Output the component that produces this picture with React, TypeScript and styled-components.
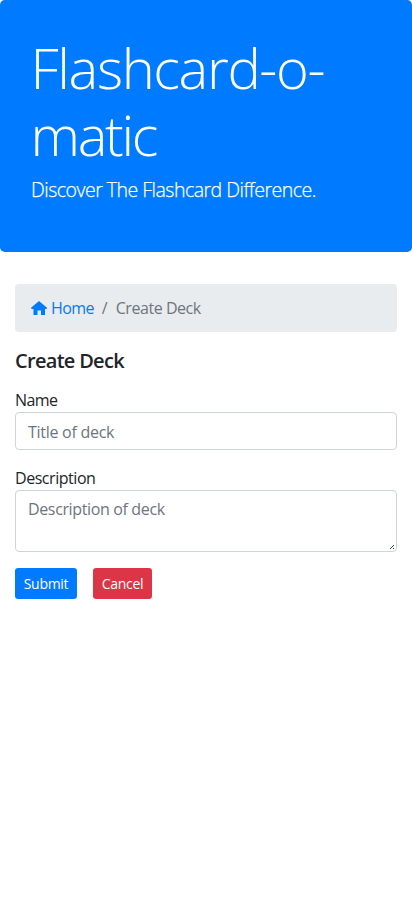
import React from 'react';
import styled, { createGlobalStyle } from 'styled-components';

const Global = createGlobalStyle`
  *, *::before, *::after { box-sizing: border-box; }
  body { margin: 0; background: #fff; color: #212529; font: 400 16px/1.5 "Open Sans", "Noto Sans", sans-serif; }
`;
const Text = styled.span<{ $tracking: number }>`
  white-space: nowrap;
  letter-spacing: ${p => p.$tracking}px;
`;
const TitleLine = styled(Text)`
  display: block;
  height: 67.2px;
`;
const Jumbotron = styled.header`
  height: 252px;
  padding: 34px 32px 32px;
  background: #007bff;
  color: #fff;
  border-radius: 4.8px;
  margin-bottom: 32px;
`;
const Title = styled.h1`
  margin: 0 0 7px -1.5px;
  font-size: 56px;
  font-weight: 300;
  line-height: 67.2px;
`;
const Lead = styled.p`
  margin: 0 0 0 -1px;
  font-size: 19.5px;
  font-weight: 300;
  line-height: 30px;
  letter-spacing: -0.5px;
  white-space: nowrap;
  -webkit-text-stroke: 0.25px #fff;
`;
const Container = styled.main`padding: 0 15px;`;
const Breadcrumb = styled.nav`
  display: flex;
  height: 48px;
  padding: 12px 16px;
  margin-bottom: 16px;
  background: #e9ecef;
  border-radius: 4px;
  color: #6c757d;
`;
const HomeLink = styled.a`
  display: flex;
  align-items: center;
  gap: 4px;
  color: #007bff;
  text-decoration: none;
`;
const Separator = styled.span`padding: 0 8px;`;
const Heading = styled.h5`
  margin: 0 0 15px;
  padding-top: 1px;
  font-size: 20px;
  font-weight: 600;
  line-height: 24px;
  letter-spacing: -0.7px;
`;
const Group = styled.div`
  position: relative;
  display: flex;
  flex-direction: column;
  margin-bottom: 16px;
`;
const Label = styled.label<{ $tracking: number }>`
  height: 24px;
  letter-spacing: ${p => p.$tracking}px;
`;
const Input = styled.input`
  height: 38px;
  padding: 8px 12px 6px;
  border: 1px solid #ced4da;
  border-radius: 4px;
  font: inherit;
  letter-spacing: -0.27px;
  &::placeholder { color: #6c757d; }
`;
const TextArea = styled.textarea`
  height: 62px;
  padding: 6px 12px;
  border: 1px solid #ced4da;
  border-radius: 4px;
  font: inherit;
  letter-spacing: -0.36px;
  resize: none;
  &::placeholder { color: #6c757d; }
`;
const Grip = styled.svg`
  position: absolute;
  right: 2px;
  bottom: 2px;
  pointer-events: none;
`;
const Actions = styled.div`display: flex; gap: 16px;`;
const Button = styled.button<{ $color: string; $width: number }>`
  width: ${p => p.$width}px;
  height: 31px;
  padding: 0;
  border: 0;
  border-radius: 3.2px;
  background: ${p => p.$color};
  color: #fff;
  font: 400 14px/21px "Open Sans", sans-serif;
  letter-spacing: -0.3px;
`;

export default function App() {
  return (
    <>
      <Global />
      <Jumbotron>
        <Title>
          <TitleLine $tracking={-1.35}>Flashcard-o-</TitleLine>
          <TitleLine $tracking={-2.3}>matic</TitleLine>
        </Title>
        <Lead>Discover The Flashcard Difference.</Lead>
      </Jumbotron>
      <Container>
        <Breadcrumb>
          <HomeLink href="#">
            <svg width="16" height="16" viewBox="0 0 16 16" fill="currentColor">
              <path d="M8 1 16 7.800l-.5 1.200H14v6h-4v-4.500H6.500V15H2.500V9H.5L0 7.800z" />
            </svg>
            <Text $tracking={-0.6}>Home</Text>
          </HomeLink>
          <Separator>/</Separator>
          <Text $tracking={-0.45}>Create Deck</Text>
        </Breadcrumb>
        <Heading>Create Deck</Heading>
        <Group>
          <Label htmlFor="name" $tracking={-0.6}>Name</Label>
          <Input id="name" placeholder="Title of deck" />
        </Group>
        <Group>
          <Label htmlFor="description" $tracking={-0.45}>Description</Label>
          <TextArea id="description" placeholder="Description of deck" />
          <Grip width="5" height="5" viewBox="0 0 5 5" fill="#444" shapeRendering="crispEdges">
            <path d="M3 0h1v1H3zM2 1h1v1H2zM1 2h1v1H1zM0 3h1v1H0zM3 3h1v1H3z" />
          </Grip>
        </Group>
        <Actions>
          <Button $color="#007bff" $width={62}>Submit</Button>
          <Button $color="#dc3545" $width={59}>Cancel</Button>
        </Actions>
      </Container>
    </>
  );
}
